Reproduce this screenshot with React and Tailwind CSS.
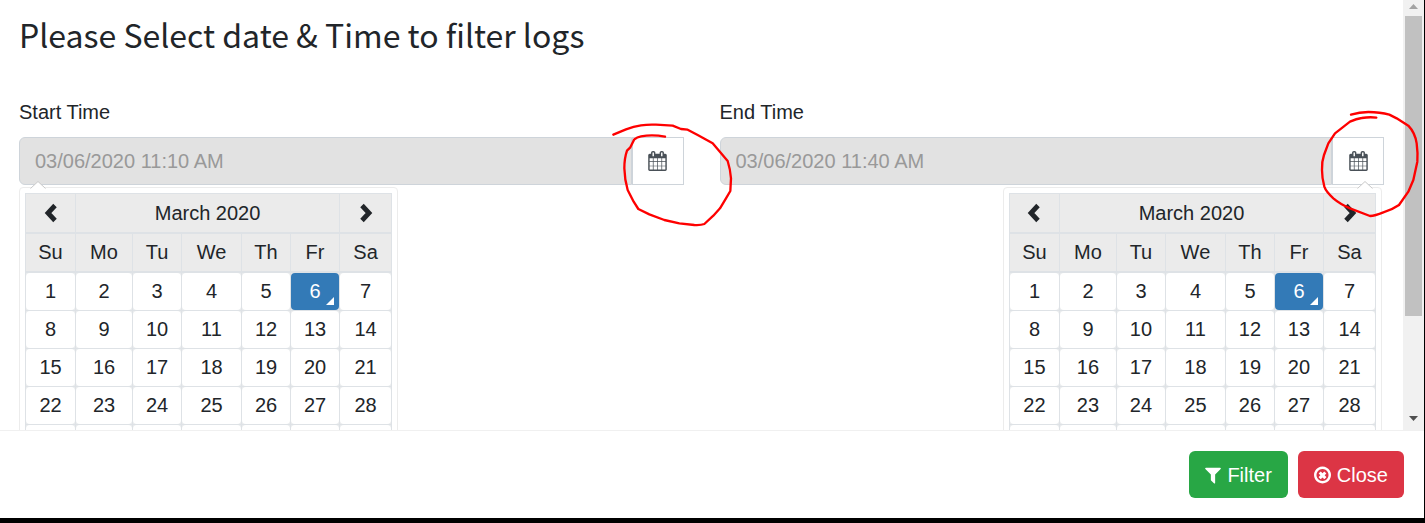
import React from "react";

const WEEKDAYS = ["Su", "Mo", "Tu", "We", "Th", "Fr", "Sa"];
const WEEKS = [
  [1, 2, 3, 4, 5, 6, 7],
  [8, 9, 10, 11, 12, 13, 14],
  [15, 16, 17, 18, 19, 20, 21],
  [22, 23, 24, 25, 26, 27, 28],
];
const TODAY = 6;

function CalendarIcon() {
  return (
    <svg viewBox="64 0 1664 1792" className="h-5 w-[19px] fill-[#495057]" aria-hidden="true">
      <path d="M192 1664h288v-288h-288v288zm352 0h320v-288h-320v288zm-352-352h288v-320h-288v320zm352 0h320v-320h-320v320zm-352-384h288v-288h-288v288zm736 736h320v-288h-320v288zm-384-736h320v-288h-320v288zm768 736h288v-288h-288v288zm-384-352h320v-320h-320v320zm-352-864v-288q0-13-9.5-22.5t-22.5-9.5h-64q-13 0-22.5 9.5t-9.5 22.5v288q0 13 9.5 22.5t22.5 9.5h64q13 0 22.5-9.5t9.5-22.5zm736 864h288v-320h-288v320zm-384-384h320v-288h-320v288zm384 0h288v-288h-288v288zm32-480v-288q0-13-9.5-22.5t-22.5-9.5h-64q-13 0-22.5 9.5t-9.5 22.5v288q0 13 9.5 22.5t22.5 9.5h64q13 0 22.5-9.5t9.5-22.5zm384-64v1280q0 52-38 90t-90 38h-1408q-52 0-90-38t-38-90v-1280q0-52 38-90t90-38h128v-96q0-66 47-113t113-47h64q66 0 113 47t47 113v96h384v-96q0-66 47-113t113-47h64q66 0 113 47t47 113v96h128q52 0 90 38t38 90z" />
    </svg>
  );
}

function FilterIcon() {
  return (
    <svg viewBox="192 0 1408 1792" className="h-5 w-4 fill-current" aria-hidden="true">
      <path d="M1595 295q17 41-14 70l-493 493v742q0 42-39 59-13 5-25 5-27 0-45-19l-256-256q-19-19-19-45v-486l-493-493q-31-29-14-70 17-39 59-39h1280q42 0 59 39z" />
    </svg>
  );
}

function CloseIcon() {
  return (
    <svg viewBox="128 0 1536 1792" className="h-5 w-[17px] fill-current" aria-hidden="true">
      <path d="M1225 1111l-146 146q-10 10-23 10t-23-10l-137-137-137 137q-10 10-23 10t-23-10l-146-146q-10-10-10-23t10-23l137-137-137-137q-10-10-10-23t10-23l146-146q10-10 23-10t23 10l137 137 137-137q10-10 23-10t23 10l146 146q10 10 10 23t-10 23l-137 137 137 137q10 10 10 23t-10 23zm215-215q0-148-73-273t-198-198-273-73-273 73-198 198-73 273 73 273 198 198 273 73 273-73 198-198 73-273zm224 0q0 209-103 385.5t-279.5 279.5-385.5 103-385.5-103-279.5-279.5-103-385.5 103-385.5 279.5-279.5 385.5-103 385.5 103 279.5 279.5 103 385.5z" />
    </svg>
  );
}

function Chevron({ points }) {
  return (
    <svg viewBox="0 0 14 20" className="h-5 w-[14px] fill-none stroke-[#212529]" strokeWidth="4.8" aria-hidden="true">
      <polyline points={points} />
    </svg>
  );
}

const head = "border border-b-2 border-[#dee2e6] bg-[#ebebeb] p-0 font-normal";

function Calendar({ align }) {
  const right = align === "right";
  return (
    <div
      className={
        "absolute top-[50px] rounded border border-[#ececec] bg-white p-[5px] " +
        (right ? "right-0.5" : "left-0")
      }
    >
      <svg
        viewBox="0 0 16 8"
        className={"absolute -top-[7px] h-2 w-4 " + (right ? "right-2" : "left-2.5")}
        aria-hidden="true"
      >
        <path d="M0 8L8 0.5L16 8Z" fill="#fff" />
        <path d="M0.5 7.5L8 0.5L15.5 7.5" fill="none" stroke="#c8c8c8" />
      </svg>
      <table className="w-[367px] table-fixed border-collapse bg-[#e9ebed] text-center">
        <colgroup>
          <col className="w-[50px]" />
          <col className="w-[57px]" />
          <col className="w-[49px]" />
          <col className="w-[60px]" />
          <col className="w-[49px]" />
          <col className="w-[49px]" />
          <col className="w-[52px]" />
        </colgroup>
        <thead>
          <tr className="h-[39px]">
            <th className={head}>
              <button aria-label="Previous month" className="flex h-9 w-full items-center justify-center">
                <Chevron points="11,2.5 4,10 11,17.5" />
              </button>
            </th>
            <th colSpan={5} className={head}>
              <button className="h-9 w-full">March 2020</button>
            </th>
            <th className={head}>
              <button aria-label="Next month" className="flex h-9 w-full items-center justify-center">
                <Chevron points="3,2.5 10,10 3,17.5" />
              </button>
            </th>
          </tr>
          <tr className="h-[39px]">
            {WEEKDAYS.map((d) => (
              <th key={d} scope="col" className={head}>
                {d}
              </th>
            ))}
          </tr>
        </thead>
        <tbody>
          {WEEKS.map((week, w) => (
            <tr key={w} className="h-[38px]">
              {week.map((day) => {
                const active = day === TODAY;
                return (
                  <td key={day} className="border border-[#dee2e6] p-0">
                    <button
                      className={
                        "relative block h-[37px] w-full rounded " +
                        (active ? "bg-[#337ab7] text-white" : "bg-white")
                      }
                    >
                      {day}
                      {active && (
                        <svg viewBox="0 0 8 8" className="absolute right-[5px] bottom-[5px] size-2 fill-white" aria-hidden="true">
                          <path d="M8 0V8H0Z" />
                        </svg>
                      )}
                    </button>
                  </td>
                );
              })}
            </tr>
          ))}
          <tr className="h-[38px]">
            {WEEKDAYS.map((d) => (
              <td key={d} className="border border-[#dee2e6] p-0">
                <div className="h-[37px] rounded bg-white" />
              </td>
            ))}
          </tr>
        </tbody>
      </table>
    </div>
  );
}

function Scribble({ viewBox, d }) {
  return (
    <svg
      viewBox={viewBox}
      className="pointer-events-none absolute -top-8 -left-5 z-20 size-[125px] max-w-none fill-none stroke-[#fe0000]"
      strokeWidth="7"
      strokeLinecap="round"
      strokeLinejoin="round"
      aria-hidden="true"
    >
      <path d={d} />
    </svg>
  );
}

function DateField({ id, label, value, align, scribble }) {
  return (
    <div className="flex flex-1 flex-col gap-[13px]">
      <label htmlFor={id} className="self-start leading-6">
        {label}
      </label>
      <div className="relative flex">
        <input
          id={id}
          disabled
          defaultValue={value}
          className="h-12 w-0 min-w-0 flex-1 rounded-l-md border border-[#ced4da] bg-[#e2e2e2] px-[15px] text-[#999999]"
        />
        <div className="relative flex">
          <button
            aria-label={"Choose " + label}
            className="flex w-[52px] items-center justify-center border border-[#ced4da] bg-white"
          >
            <CalendarIcon />
          </button>
          <Scribble {...scribble} />
        </div>
        <Calendar align={align} />
      </div>
    </div>
  );
}

export default function App() {
  return (
    <div className="flex h-screen flex-col border-r border-b-[5px] border-black bg-white font-['Liberation_Sans',Arial,sans-serif] text-[20px] text-[#212529]">
      <div className="flex min-h-0 flex-1 overflow-hidden">
        <main className="flex-1 px-[19px] pt-3.5">
          <h1 className="mb-[46px] font-['Noto_Sans_CJK_SC','Source_Sans_Pro',sans-serif] text-[32px] leading-10">
            Please Select date &amp; Time to filter logs
          </h1>
          <div className="flex gap-9">
            <DateField
              id="start-time"
              label="Start Time"
              value="03/06/2020 11:10 AM"
              align="left"
              scribble={{
                viewBox: "33 45 375 375",
                d: "M37 134L75 118Q98 109 120 106Q140 103 165 104L215 107L240 117L260 119L290 135L335 160L380 213Q388 238 390 265L388 303L375 325L357 355L337 377L310 402Q300 406 280 405L235 400L190 390L145 373L112 357L98 335L80 300Q71 270 70 235Q70 205 78 182L88 172L100 148Q108 141 120 139Q155 133 192 140",
              }}
            />
            <DateField
              id="end-time"
              label="End Time"
              value="03/06/2020 11:40 AM"
              align="right"
              scribble={{
                viewBox: "36 45 375 375",
                d: "M153 74Q178 66 205 66Q240 66 268 74L290 85L325 107Q345 128 350 160Q354 190 352 215L340 270L325 305L297 345Q275 360 250 367Q225 377 210 378L150 355Q120 342 100 325Q78 305 73 290Q66 265 66 240Q65 215 72 195L85 160L105 130L150 95Q170 86 185 84Q210 80 229 83",
              }}
            />
          </div>
        </main>
        <div className="flex w-[21px] shrink-0 flex-col items-center justify-between bg-[#f1f1f1] pb-[9px]" aria-hidden="true">
          <div className="flex min-h-0 w-full flex-1 flex-col items-center">
            <svg viewBox="0 0 21 16" className="h-4 w-[21px] shrink-0 fill-[#a3a3a3]">
              <path d="M6 9L10.5 4L15 9Z" />
            </svg>
            <div className="h-[72%] w-[17px] bg-[#c1c1c1]" />
          </div>
          <svg viewBox="0 0 9 5" className="h-[5px] w-[9px] fill-[#505050]">
            <path d="M0 0H9L4.5 5Z" />
          </svg>
        </div>
      </div>
      <footer className="z-10 flex justify-end gap-2.5 border-t border-[#f0f0f0] bg-white p-5 text-white">
        <button className="flex h-[47px] items-center gap-1.5 rounded-md bg-[#28a745] px-4">
          <FilterIcon />
          Filter
        </button>
        <button className="flex h-[47px] items-center gap-1.5 rounded-md bg-[#dc3545] px-4">
          <CloseIcon />
          Close
        </button>
      </footer>
    </div>
  );
}
